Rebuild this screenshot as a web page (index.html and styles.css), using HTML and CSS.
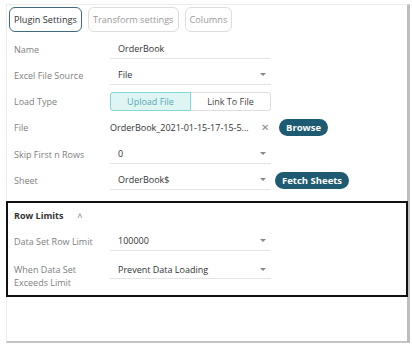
FILE: index.html
```html
<!DOCTYPE html>
<html lang="en">
<head>
    <meta charset="UTF-8">
    <title>Plugin Settings</title>
    <link rel="stylesheet" href="styles.css">
</head>
<body>
    <div class="panel">
        <div class="tabs">
            <button class="tab active">Plugin Settings</button>
            <button class="tab">Transform settings</button>
            <button class="tab">Columns</button>
        </div>

        <div class="row">
            <label>Name</label>
            <div class="field"><span>OrderBook</span></div>
        </div>
        <div class="row">
            <label>Excel File Source</label>
            <div class="field select"><span>File</span><i class="caret"></i></div>
        </div>
        <div class="row">
            <label>Load Type</label>
            <div class="toggle">
                <span class="opt on">Upload File</span>
                <span class="opt">Link To File</span>
            </div>
        </div>
        <div class="row">
            <label>File</label>
            <div class="file-name">OrderBook_2021-01-15-17-15-5...</div>
            <span class="clear">&#x2715;</span>
            <button class="pill">Browse</button>
        </div>
        <div class="row skip">
            <label>Skip First n Rows</label>
            <div class="field select"><span>0</span><i class="caret"></i></div>
        </div>
        <div class="row">
            <label>Sheet</label>
            <div class="field select"><span>OrderBook$</span><i class="caret"></i></div>
            <button class="pill fetch">Fetch Sheets</button>
        </div>

        <div class="limits">
            <div class="limits-head">Row Limits <span class="up">&#x2C4;</span></div>
            <div class="row">
                <label>Data Set Row Limit</label>
                <div class="field select"><span>100000</span><i class="caret"></i></div>
            </div>
            <div class="row tall">
                <label>When Data Set<br>Exceeds Limit</label>
                <div class="field select"><span>Prevent Data Loading</span><i class="caret"></i></div>
            </div>
        </div>
    </div>
</body>
</html>
```

FILE: styles.css
```css
* { box-sizing: border-box; }
body {
    margin: 0;
    background: #fff;
    font-family: 'Open Sans', sans-serif;
    font-size: 9px;
    color: #333;
}
.panel {
    margin: 4px 0 0 6px;
    width: 404px;
    height: 339px;
    border-top: 1px solid #ececec;
    border-left: 1px solid #ececec;
    border-right: 3px solid #bdbdbd;
    border-bottom: 2px solid #c4c4c4;
}
.tabs { display: flex; gap: 6px; padding: 2px 0 0 2px; height: 31px; }
.tab {
    font-family: 'Open Sans', sans-serif;
    font-size: 9.2px;
    color: #9a9a9a;
    background: #fff;
    border: 1px solid #ddd;
    border-radius: 6px;
    height: 25px;
    padding: 0 4px;
}
.tab.active { color: #333; border-color: #3f6b7b; }

.row { display: flex; align-items: center; height: 26px; padding-left: 7px; }
.row.skip { margin-top: 1px; }
.row label { width: 96px; color: #808080; }
.field {
    width: 161px;
    height: 19px;
    border-bottom: 1px solid #e4e4e4;
    display: flex;
    align-items: center;
    padding: 0 5px 0 8px;
}
.field span { flex: 1; }
.caret {
    width: 0; height: 0;
    border-left: 3px solid transparent;
    border-right: 3px solid transparent;
    border-top: 3px solid #888;
}
.toggle { display: flex; width: 161px; height: 19px; }
.opt {
    flex: 1;
    display: flex; align-items: center; justify-content: center;
    border: 1px solid #ddd;
    color: #444;
}
.opt.on {
    background: #dff5f4;
    border-color: #7fd8d6;
    color: #56a9b3;
    border-radius: 3px 0 0 3px;
}
.opt:last-child { border-left: none; border-radius: 0 3px 3px 0; }
.file-name { width: 151px; color: #333; white-space: nowrap; overflow: hidden; }
.clear { color: #888; font-size: 10px; width: 18px; }
.pill {
    font-family: 'Open Sans', sans-serif;
    font-size: 9.5px;
    font-weight: 700;
    color: #fff;
    background: #1e5a72;
    border: none;
    border-radius: 9px;
    height: 17px;
    padding: 0 7px;
}
.fetch { margin-left: 4px; }

.limits {
    margin: 8px 0 0 -1px;
    width: 402px;
    height: 96px;
    border: 2px solid #111;
}
.limits .row { padding-left: 6px; }
.limits-head {
    height: 25px;
    display: flex;
    align-items: center;
    padding: 0 0 0 6px;
    font-weight: 700;
    color: #333;
}
.up { color: #888; font-weight: 400; margin-left: 14px; }
.row.tall { height: 34px; align-items: flex-start; }
.row.tall label { line-height: 13px; padding-top: 9px; }
.row.tall .field { margin-top: 6px; }
```
